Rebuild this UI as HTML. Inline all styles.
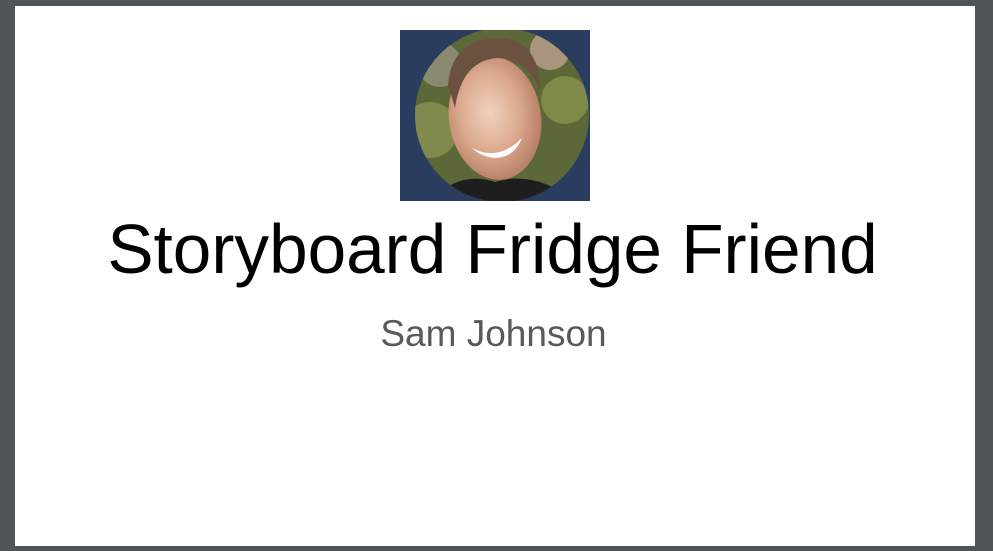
<!DOCTYPE html>
<html><head><meta charset="utf-8"><style>
html,body{margin:0;padding:0;width:993px;height:551px;overflow:hidden;background:#50555a;font-family:"Liberation Sans",Arial,sans-serif}
.page{position:absolute;left:15px;top:6px;width:960px;height:540px;background:#fff}
.photo{position:absolute;left:400px;top:30px;width:190px;height:171px}
.t{position:absolute;left:-4px;width:993px;text-align:center;white-space:nowrap}
.title{top:210px;font-size:69.3px;line-height:78px;color:#000}
.sub{top:312px;font-size:37px;line-height:44px;color:#595959;left:-3px}
</style></head><body>
<div class="page"></div>
<svg class="photo" viewBox="0 0 190 171" width="190" height="171">
<defs>
<clipPath id="c"><circle cx="102" cy="85" r="87"/></clipPath>
<radialGradient id="face" cx="0.45" cy="0.45" r="0.55"><stop offset="0" stop-color="#f2d2c0"/><stop offset="0.6" stop-color="#dba88e"/><stop offset="1" stop-color="#b98266"/></radialGradient>
</defs>
<rect width="190" height="171" fill="#2b3d5f"/>
<g clip-path="url(#c)">
<rect x="0" y="0" width="190" height="171" fill="#5d6838"/>
<circle cx="30" cy="100" r="28" fill="#7f8a4c"/>
<circle cx="165" cy="70" r="24" fill="#7d8a48"/>
<circle cx="150" cy="20" r="20" fill="#a8977c"/>
<circle cx="40" cy="35" r="22" fill="#8a8a70"/>
<ellipse cx="95" cy="88" rx="46" ry="62" fill="url(#face)" transform="rotate(-8 95 88)"/>
<path d="M48 55 Q52 8 100 8 Q140 10 140 62 Q130 30 98 28 Q62 30 55 78 Z" fill="#6b5140"/>
<path d="M72 118 Q98 132 122 108 Q114 128 94 128 Q80 126 72 118Z" fill="#fff"/>
<path d="M30 171 Q60 140 95 152 Q135 140 175 171 Z" fill="#1e1e1e"/>
</g>
</svg>
<div class="t title">Storyboard Fridge Friend</div>
<div class="t sub">Sam Johnson</div>
</body></html>
